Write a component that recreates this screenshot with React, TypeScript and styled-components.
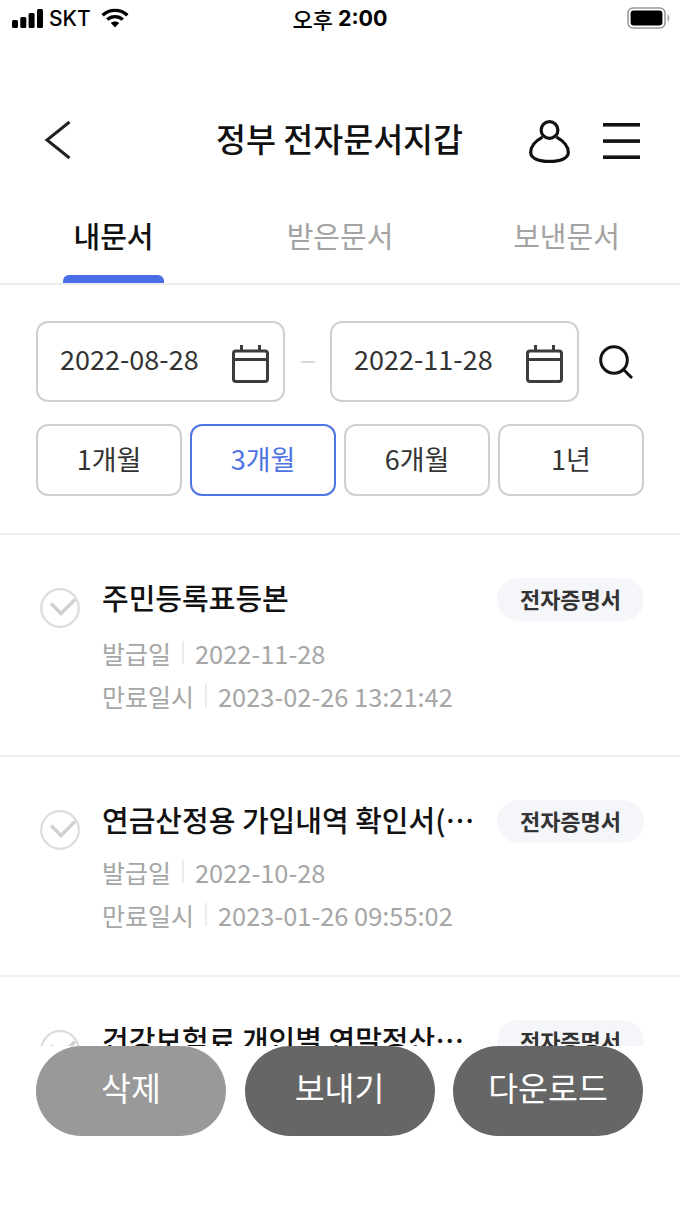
import React from 'react';
import styled, { createGlobalStyle } from 'styled-components';

const GlobalStyle = createGlobalStyle`
  html, body {
    margin: 0;
    padding: 0;
    background: #fff;
  }
  * {
    box-sizing: border-box;
  }
`;

const Page = styled.div`
  width: 680px;
  height: 1209px;
  display: flex;
  flex-direction: column;
  overflow: hidden;
  background: #fff;
  font-family: 'Noto Sans CJK KR', 'Noto Sans', sans-serif;
  color: #333;
`;

const StatusBar = styled.div`
  height: 38px;
  flex: none;
  padding: 0 10px 2px 12px;
  display: grid;
  grid-template-columns: 1fr auto 1fr;
  align-items: center;
  color: #000;
`;
const StatusLeft = styled.div`
  display: flex;
  align-items: center;
  gap: 6px;
`;
const Carrier = styled.span`
  font-family: 'Inter', sans-serif;
  font-size: 21px;
  font-weight: 500;
  margin-right: 4px;
`;
const Clock = styled.span`
  font-size: 22px;
  font-weight: 500;
  display: flex;
  align-items: center;
  gap: 5px;
  padding-right: 2px;
`;
const ClockTime = styled.b`
  font-family: 'Inter', sans-serif;
  font-size: 21.5px;
  font-weight: 700;
`;
const StatusRight = styled.div`
  display: flex;
  justify-content: flex-end;
`;

const Header = styled.header`
  height: 86px;
  flex: none;
  margin-top: 59px;
  padding: 0 40px 0 44px;
  display: flex;
  align-items: center;
  position: relative;
  justify-content: space-between;
`;
const Title = styled.h1`
  position: absolute;
  left: 0;
  right: 1px;
  top: 17px;
  margin: 0;
  text-align: center;
  font-size: 32.6px;
  line-height: 48px;
  font-weight: 500;
  color: #111;
`;
const HeaderIcons = styled.div`
  display: flex;
  align-items: center;
  gap: 33px;
  margin-top: 2px;
`;

const Tabs = styled.nav`
  height: 104px;
  flex: none;
  margin-top: -2px;
  display: grid;
  grid-template-columns: 227px 226px 227px;
  border-bottom: 2px solid #ececec;
`;
const Tab = styled.div<{ $active?: boolean }>`
  position: relative;
  text-align: center;
  padding-top: 33px;
  font-size: 29px;
  line-height: 42px;
  font-weight: ${p => (p.$active ? 500 : 400)};
  color: ${p => (p.$active ? '#111' : '#a3a3a3')};

  ${p =>
    p.$active &&
    `
    &::after {
      content: '';
      position: absolute;
      left: 63px;
      bottom: 0;
      width: 101px;
      height: 8px;
      background: #4a6ee8;
      border-radius: 6px 6px 0 0;
    }
  `}
`;

const Filter = styled.section`
  flex: none;
  padding: 36px 36px 37px 36px;
  display: flex;
  flex-direction: column;
  gap: 22px;
  border-bottom: 2px solid #efefef;
`;
const DateRow = styled.div`
  display: flex;
  align-items: center;
`;
const DateBox = styled.div`
  width: 249px;
  height: 81px;
  padding: 0 14px 0 22px;
  display: flex;
  align-items: center;
  justify-content: space-between;
  border: 2px solid #d0d0d0;
  border-radius: 12px;
  font-size: 27px;
  color: #333;
`;
const DateText = styled.span`
  padding-bottom: 6px;
`;
const DateIcon = styled.span`
  display: flex;
  margin-top: 5px;
`;
const Dash = styled.span`
  width: 14px;
  height: 2px;
  margin: 0 15px 0 16px;
  background: #d8d8d8;
`;
const SearchButton = styled.span`
  display: flex;
  margin-left: 20px;
`;
const PeriodRow = styled.div`
  display: grid;
  grid-template-columns: repeat(4, 146px);
  gap: 8px;
`;
const Period = styled.div<{ $active?: boolean }>`
  height: 72px;
  display: flex;
  align-items: center;
  justify-content: center;
  padding-bottom: 3px;
  border: 2px solid ${p => (p.$active ? '#4f74e3' : '#d0d0d0')};
  border-radius: 12px;
  font-size: 27px;
  color: ${p => (p.$active ? '#4f74e3' : '#333')};
`;

const List = styled.div`
  flex: 1;
  min-height: 0;
  overflow: hidden;
`;
const Row = styled.article<{ $tall?: boolean }>`
  height: ${p => (p.$tall ? 222 : 220)}px;
  padding: 40px 36px 0 40px;
  display: flex;
  align-items: flex-start;
  border-bottom: 2px solid #efefef;
`;
const Check = styled.span`
  flex: none;
  display: flex;
  width: 62px;
  margin-top: 13px;
`;
const RowBody = styled.div`
  flex: 1;
  min-width: 0;
`;
const RowTop = styled.div`
  display: flex;
  align-items: flex-start;
  justify-content: space-between;
  gap: 16px;
`;
const DocTitle = styled.div`
  flex: 1;
  min-width: 0;
  font-size: 29px;
  line-height: 44px;
  font-weight: 500;
  color: #111;
  white-space: nowrap;
  overflow: hidden;
  text-overflow: ellipsis;
`;
const Chip = styled.span`
  flex: none;
  width: 147px;
  height: 43px;
  margin-top: 3px;
  padding-bottom: 4px;
  display: flex;
  align-items: center;
  justify-content: center;
  background: #f5f6fa;
  border-radius: 22px;
  font-size: 22px;
  font-weight: 700;
  color: #333;
`;
const MetaGroup = styled.div<{ $tall?: boolean }>`
  margin-top: ${p => (p.$tall ? 10 : 7)}px;
`;
const Meta = styled.div`
  display: flex;
  align-items: center;
  height: 43px;
  font-size: 25.4px;
  color: #a6a6a6;
`;
const MetaLabel = styled.span`
  font-size: 25px;
`;
const MetaBar = styled.i`
  width: 2px;
  height: 23px;
  margin: 0 11px;
  background: #ececec;
`;

const Footer = styled.footer`
  height: 163px;
  flex: none;
  padding: 0 37px 0 36px;
  display: grid;
  grid-template-columns: repeat(3, 190px);
  justify-content: space-between;
  align-items: start;
  background: #fff;
`;
const Action = styled.div<{ $muted?: boolean }>`
  height: 90px;
  display: flex;
  align-items: center;
  justify-content: center;
  padding-bottom: 9px;
  border-radius: 45px;
  background: ${p => (p.$muted ? '#999' : '#666')};
  color: #fff;
  font-size: 32.5px;
`;

const docs = [
  { title: '주민등록표등본', issued: '2022-11-28', expires: '2023-02-26 13:21:42' },
  { title: '연금산정용 가입내역 확인서(국민연금)', issued: '2022-10-28', expires: '2023-01-26 09:55:02' },
  { title: '건강보험료 개인별 연말정산내역서', issued: '2022-10-28', expires: '2023-01-26 09:55:02' },
];

const SignalIcon = () => (
  <svg width="31" height="19" viewBox="0 0 31 19" fill="#000">
    <rect x="0" y="11" width="6" height="8" rx="1.5" />
    <rect x="8.300" y="8" width="6" height="11" rx="1.5" />
    <rect x="16.600" y="4" width="6" height="15" rx="1.5" />
    <rect x="25" y="0" width="6" height="19" rx="1.5" />
  </svg>
);

const WifiIcon = () => (
  <svg width="28" height="20" viewBox="0 0 28 20" fill="none" stroke="#000" strokeWidth="3.4">
    <path d="M1.6 7.2C8.6 .8 19.4 .8 26.4 7.2" />
    <path d="M6.2 11.6c4.4-4 11.2-4 15.6 0" />
    <path d="M14 19.6l-4.2-4.6c2.4-2 6-2 8.4 0z" fill="#000" stroke="none" />
  </svg>
);

const BatteryIcon = () => (
  <svg width="43" height="22" viewBox="0 0 43 22" fill="none">
    <rect x="1" y="1" width="37" height="20" rx="5" stroke="#999" strokeWidth="1.6" />
    <rect x="3.6" y="3.6" width="31.8" height="14.8" rx="3" fill="#000" />
    <path d="M40.4 7.5c1.4.5 2 1.8 2 3.500s-.6 3-2 3.500z" fill="#aaa" />
  </svg>
);

const BackIcon = () => (
  <svg width="28" height="40" viewBox="0 0 28 40" fill="none" stroke="#222" strokeWidth="3">
    <path d="M25.5 2L3 20l22.5 18" />
  </svg>
);

const UserIcon = () => (
  <svg width="41" height="43" viewBox="0 0 41 43" fill="none" stroke="#111" strokeWidth="3.2">
    <circle cx="20.500" cy="10" r="8.400" />
    <path d="M13.500 17.200C6.500 21 1.700 26.500 1.700 32.500 1.700 38.500 10 41.400 20.500 41.400S39.300 38.500 39.300 32.500C39.300 26.500 34.500 21 27.500 17.200" />
  </svg>
);

const MenuIcon = () => (
  <svg width="37" height="36" viewBox="0 0 37 36" fill="#111">
    <rect x="0" y="0" width="37" height="3.6" />
    <rect x="0" y="16.300" width="37" height="3.6" />
    <rect x="0" y="32.400" width="37" height="3.6" />
  </svg>
);

const CalendarIcon = () => (
  <svg width="37" height="38" viewBox="0 0 37 38" fill="none" stroke="#3c3c3c" strokeWidth="3">
    <rect x="1.500" y="6" width="34" height="30.500" rx="2.500" />
    <path d="M1.500 14.500h34" />
    <path d="M9.500 0v7M27.500 0v7" />
  </svg>
);

const SearchIcon = () => (
  <svg width="34" height="34" viewBox="0 0 34 34" fill="none" stroke="#111" strokeWidth="3">
    <circle cx="15" cy="15" r="13.300" />
    <path d="M24.500 24.500l8.500 8.500" />
  </svg>
);

const CheckIcon = () => (
  <svg width="40" height="40" viewBox="0 0 40 40" fill="none">
    <circle cx="20" cy="20" r="18.800" stroke="#dcdcdc" strokeWidth="2.200" />
    <path d="M11 15.500l10 10 14-14" stroke="#d0d0d0" strokeWidth="3.400" />
  </svg>
);

function App() {
  return (
    <Page>
      <GlobalStyle />
      <StatusBar>
        <StatusLeft>
          <SignalIcon />
          <Carrier>SKT</Carrier>
          <WifiIcon />
        </StatusLeft>
        <Clock>
          오후 <ClockTime>2:00</ClockTime>
        </Clock>
        <StatusRight>
          <BatteryIcon />
        </StatusRight>
      </StatusBar>

      <Header>
        <BackIcon />
        <Title>정부 전자문서지갑</Title>
        <HeaderIcons>
          <UserIcon />
          <MenuIcon />
        </HeaderIcons>
      </Header>

      <Tabs>
        <Tab $active>내문서</Tab>
        <Tab>받은문서</Tab>
        <Tab>보낸문서</Tab>
      </Tabs>

      <Filter>
        <DateRow>
          <DateBox>
            <DateText>2022-08-28</DateText>
            <DateIcon>
              <CalendarIcon />
            </DateIcon>
          </DateBox>
          <Dash />
          <DateBox>
            <DateText>2022-11-28</DateText>
            <DateIcon>
              <CalendarIcon />
            </DateIcon>
          </DateBox>
          <SearchButton>
            <SearchIcon />
          </SearchButton>
        </DateRow>
        <PeriodRow>
          <Period>1개월</Period>
          <Period $active>3개월</Period>
          <Period>6개월</Period>
          <Period>1년</Period>
        </PeriodRow>
      </Filter>

      <List>
        {docs.map((doc, i) => (
          <Row key={doc.title} $tall={i === 0}>
            <Check>
              <CheckIcon />
            </Check>
            <RowBody>
              <RowTop>
                <DocTitle>{doc.title}</DocTitle>
                <Chip>전자증명서</Chip>
              </RowTop>
              <MetaGroup $tall={i === 0}>
                <Meta>
                  <MetaLabel>발급일</MetaLabel>
                  <MetaBar />
                  {doc.issued}
                </Meta>
                <Meta>
                  <MetaLabel>만료일시</MetaLabel>
                  <MetaBar />
                  {doc.expires}
                </Meta>
              </MetaGroup>
            </RowBody>
          </Row>
        ))}
      </List>

      <Footer>
        <Action $muted>삭제</Action>
        <Action>보내기</Action>
        <Action>다운로드</Action>
      </Footer>
    </Page>
  );
}

export default App;
